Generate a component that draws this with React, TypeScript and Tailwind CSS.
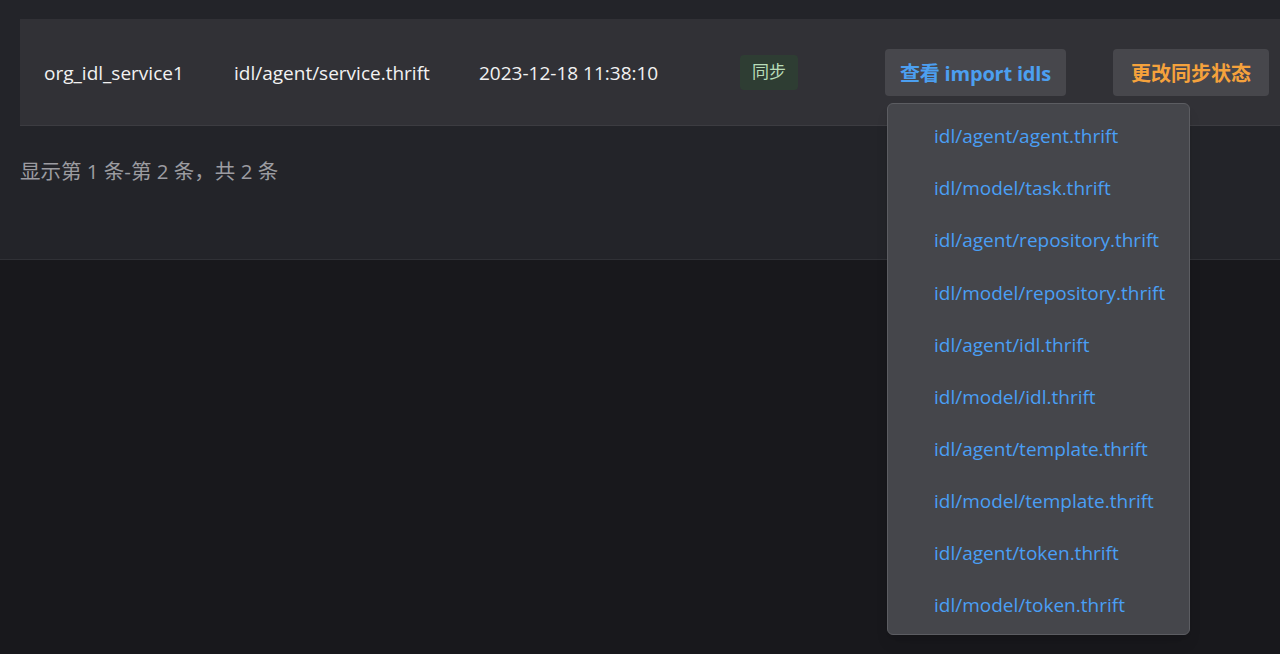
import React from "react";

const files = [
  "idl/agent/agent.thrift",
  "idl/model/task.thrift",
  "idl/agent/repository.thrift",
  "idl/model/repository.thrift",
  "idl/agent/idl.thrift",
  "idl/model/idl.thrift",
  "idl/agent/template.thrift",
  "idl/model/template.thrift",
  "idl/agent/token.thrift",
  "idl/model/token.thrift",
];

export default function App() {
  return (
    <div
      className="w-[1280px] h-[654px] overflow-hidden bg-[#18181c] text-[19px]"
      style={{ fontFamily: '"Open Sans", "Noto Sans CJK SC", sans-serif' }}
    >
      <div className="h-[260px] bg-[#232429] border-b border-[#303136] pt-[19px] pl-[20px]">
        <div className="h-[107px] bg-[#313136] border-b border-[#3c3c41] flex items-center text-[#f2f2f2]">
          <div className="w-[214px] pl-[24px] pt-[3px]">org_idl_service1</div>
          <div className="w-[245px] pt-[3px]">idl/agent/service.thrift</div>
          <div className="w-[261px] pt-[3px]">2023-12-18 11:38:10</div>
          <div className="w-[145px]">
            <span className="inline-flex items-center h-[35px] px-[12px] rounded-[4px] bg-[#2e3d33] text-[#b8dcb8] text-[17px]">
              同步
            </span>
          </div>
          <div className="relative">
            <button className="h-[47px] w-[181px] pt-[3px] rounded-[4px] bg-[#47474c] text-[#4c9ff0] font-bold text-[20px] tracking-[-0.2px]">
              查看 import idls
            </button>
            <div className="absolute left-[2px] top-[54px] w-[303px] h-[532px] rounded-[6px] bg-[#45464b] border border-[#5c5d62] shadow-lg pt-[7px] z-10">
              {files.map((f) => (
                <div key={f} className="h-[52.1px] flex items-center pl-[46px] text-[#4a9ff5]">
                  {f}
                </div>
              ))}
            </div>
          </div>
          <div className="ml-[47px]">
            <button className="h-[47px] w-[156px] pt-[3px] rounded-[4px] bg-[#47474c] text-[#f5a23c] font-bold text-[20px]">
              更改同步状态
            </button>
          </div>
        </div>
        <div className="mt-[30px] text-[#9c9ca1] text-[20.5px]">显示第 1 条-第 2 条，共 2 条</div>
      </div>
    </div>
  );
}
